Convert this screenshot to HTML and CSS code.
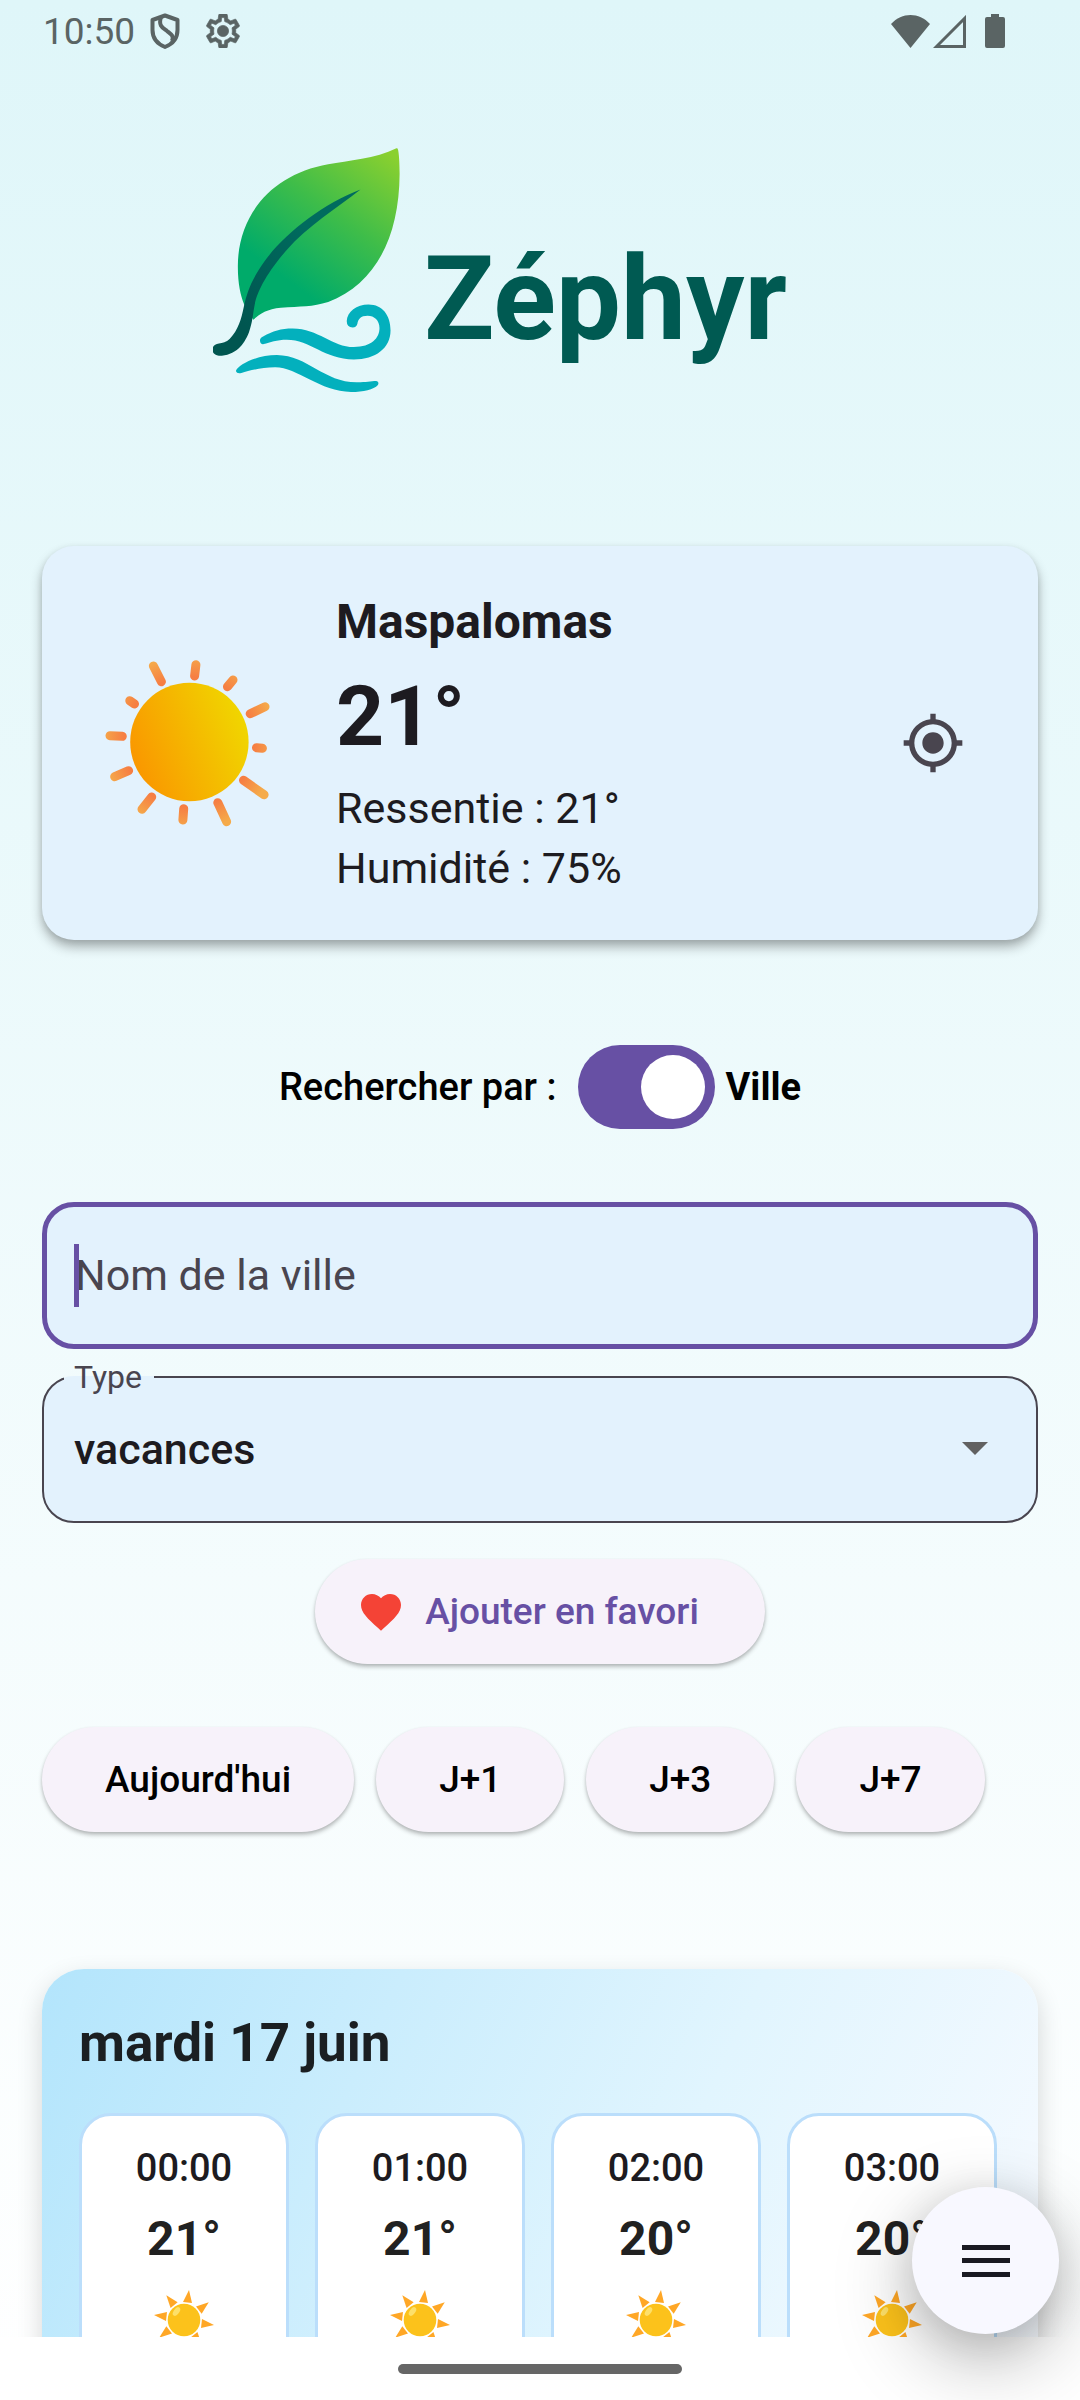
FILE: index.html
```html
<!DOCTYPE html>
<html lang="fr">
<head>
<meta charset="utf-8">
<meta name="viewport" content="width=device-width, initial-scale=1">
<title>Zéphyr</title>
<link rel="stylesheet" href="styles.css">
</head>
<body>
<div class="shell">
  <header class="status">
    <div class="status-group">
      <time class="clock">10:50</time>
      <svg class="ic-shield" viewBox="0 0 30 36" width="30" height="36" fill="none" stroke="#5a6464" stroke-width="4" stroke-linejoin="round"><path d="M15 2.500 27.500 7v10c0 8-5 14-12.500 17C7.500 31 2.500 25 2.500 17V7z"/><path d="M11 4C8 13 13 15 17 18c5 4 7 5 5 10"/></svg>
      <svg class="ic-gear" viewBox="2 2 20 20" width="34" height="34" fill="#5a6464" stroke="#5a6464" stroke-width=".4"><path d="M19.430 12.980c.040-.320.070-.640.070-.980s-.030-.660-.070-.980l2.110-1.650c.190-.150.240-.420.120-.640l-2-3.460c-.090-.160-.260-.250-.440-.250-.060 0-.120.010-.170.030l-2.490 1c-.520-.400-1.080-.730-1.690-.980l-.380-2.650C14.460 2.180 14.250 2 14 2h-4c-.250 0-.460.180-.490.420l-.380 2.650c-.610.250-1.170.590-1.690.980l-2.490-1c-.060-.020-.120-.030-.180-.030-.170 0-.340.090-.430.250l-2 3.460c-.130.220-.070.490.120.640l2.110 1.650c-.040.320-.070.650-.070.980s.030.660.070.980l-2.110 1.650c-.190.150-.240.420-.120.640l2 3.460c.090.160.260.250.440.250.060 0 .120-.010.170-.030l2.490-1c.520.400 1.080.730 1.690.980l.380 2.650c.030.240.240.420.490.420h4c.250 0 .460-.180.490-.420l.380-2.650c.610-.250 1.170-.590 1.690-.980l2.490 1c.060.020.120.030.180.030.170 0 .340-.090.430-.250l2-3.460c.120-.220.070-.490-.120-.640l-2.110-1.650zm-1.980-1.710c.040.310.050.520.050.730 0 .210-.020.430-.050.730l-.140 1.130.890.700 1.080.840-.700 1.210-1.270-.510-1.040-.420-.900.680c-.430.320-.840.560-1.250.730l-1.060.430-.160 1.130-.200 1.350h-1.400l-.190-1.350-.160-1.130-1.060-.430c-.430-.180-.830-.410-1.230-.710l-.910-.700-1.060.430-1.270.510-.700-1.210 1.080-.840.890-.700-.140-1.130c-.030-.310-.050-.540-.050-.740s.020-.430.050-.730l.140-1.130-.890-.700-1.080-.840.700-1.210 1.270.510 1.040.420.900-.680c.430-.320.840-.560 1.250-.730l1.060-.430.160-1.130.200-1.350h1.390l.190 1.350.160 1.130 1.060.430c.430.180.830.410 1.230.710l.910.700 1.060-.430 1.270-.510.700 1.210-1.070.850-.890.700.140 1.130z"/><circle cx="12" cy="12" r="3.300"/></svg>
    </div>
    <div class="status-group status-right">
      <svg viewBox="0 0 39 33" width="39" height="33" fill="#5a6464"><path d="M19.500 33 0 9C11-3 28-3 39 9z"/></svg>
      <svg class="ic-signal" viewBox="0 0 33 33" width="33" height="33" fill="none" stroke="#5a6464" stroke-width="3"><path d="M3.500 31.500h28v-28z"/></svg>
      <svg viewBox="0 0 20 34" width="20" height="34" fill="#5a6464"><path d="M6 0h8v3h4q2 0 2 2v27q0 2-2 2H2q-2 0-2-2V5q0-2 2-2h4z"/></svg>
    </div>
  </header>

  <main class="content">
    <h1 class="logo">
      <svg viewBox="58 52 474 736" width="187" height="245" preserveAspectRatio="none" aria-hidden="true">
        <defs>
          <linearGradient id="leaf" x1=".9" y1="0" x2=".35" y2=".8"><stop offset="0" stop-color="#8ad02f"/><stop offset=".5" stop-color="#3fbd49"/><stop offset="1" stop-color="#00ab6a"/></linearGradient>
          <linearGradient id="stem" x1="1" y1="0" x2="0" y2="1"><stop offset=".3" stop-color="#006b5e"/><stop offset=".8" stop-color="#005650"/></linearGradient>
        </defs>
        <path fill="url(#leaf)" d="M523 53C470 85 400 90 350 101 210 130 120 250 121 410c0 50 7 85 16 112l23 46c15-16 35-33 70-36 50-4 80-2 120-17C470 460 530 320 531 130c0-35-2-65-4-73q-1-5-4-4z"/>
        <path fill="url(#stem)" d="M432 177C335 220 240 310 190 390c-35 58-46 95-54 140-6 35-14 70-36 96-8 10-18 12-27 13-23 4-22 34 0 37 42 0 64-34 76-70 9-28 10-55 15-85 6-36 28-90 78-159 60-80 126-125 190-185z"/>
        <g fill="#03b0bd">
          <path d="M177 630q0-8 8-12c25-16 45-24 75-24 65 0 100 56 155 56 45 0 65-27 65-57 0-23-13-37-30-37-18 0-24 10-26 24q-2 11-12 11-15 0-15-19c1-28 25-50 55-50 36 0 56 33 56 78 0 53-38 87-93 87-75 0-110-59-170-59-25 0-43 8-58 13q-9 2-10-11z"/>
          <path d="M116 722c6-20 54-48 104-48 80 2 120 84 205 82 20 0 33-4 47-4q8 2 4 12c-11 14-36 21-68 21-78 0-138-75-193-74-35 1-65 9-85 17q-12 3-14-6z"/>
        </g>
      </svg>
      <span class="wordmark">Zéphyr</span>
    </h1>

    <section class="weather">
      <svg viewBox="0 0 166 167" width="166" height="167" role="img" aria-label="Ensoleillé">
        <defs>
          <linearGradient id="sun" x1="0" y1=".7" x2="1" y2=".3"><stop offset="0" stop-color="#fa9500"/><stop offset="1" stop-color="#f0d800"/></linearGradient>
          <radialGradient id="rays" gradientUnits="userSpaceOnUse" cx="84" cy="82" r="88"><stop offset=".74" stop-color="#f67e43"/><stop offset="1" stop-color="#f5ab4a"/></radialGradient>
        </defs>
        <path stroke="url(#rays)" stroke-width="9" stroke-linecap="round" d="M48.400 6l8 15.700M90.900 4.700 89.600 16M128 20l-5.500 6.700M160 46.700l-14.800 7M151.500 87.700l5.900.600M138.500 120.300l20.600 14.400M112.800 142.700l8.800 19M78.700 148.700l-.800 11.300M46.700 137 37 149.300M23.600 110.700l-13.900 6M17.300 76.300 5 75.700M24.800 40.700l4.700 3.300"/>
        <circle cx="84.400" cy="82" r="59.200" fill="url(#sun)"/>
      </svg>
      <div class="weather-text">
        <h2 class="city">Maspalomas</h2>
        <p class="degrees">21°</p>
        <p>Ressentie : 21°</p>
        <p>Humidité : 75%</p>
      </div>
      <button class="locate" type="button" aria-label="Ma position">
        <svg viewBox="0 0 24 24" width="64" height="64" fill="#49454f"><path d="M12 8c-2.210 0-4 1.790-4 4s1.790 4 4 4 4-1.790 4-4-1.790-4-4-4zm8.940 3A8.994 8.994 0 0 0 13 3.060V1h-2v2.060A8.994 8.994 0 0 0 3.060 11H1v2h2.060A8.994 8.994 0 0 0 11 20.940V23h2v-2.060A8.994 8.994 0 0 0 20.940 13H23v-2h-2.060zM12 19c-3.870 0-7-3.130-7-7s3.130-7 7-7 7 3.130 7 7-3.130 7-7 7z"/></svg>
      </button>
    </section>

    <div class="mode">
      <label for="mode">Rechercher par :</label>
      <input class="switch" type="checkbox" role="switch" id="mode" checked>
      <strong>Ville</strong>
    </div>

    <div class="field">
      <input class="city-input" type="text" placeholder="Nom de la ville" aria-label="Nom de la ville">
      <span class="caret"></span>
    </div>

    <fieldset class="select-field">
      <legend><label for="kind">Type</label></legend>
      <select id="kind"><option>vacances</option></select>
      <svg class="arrow" viewBox="0 0 26 13" width="26" height="13" fill="#616161"><path d="M0 0h26L13 13z"/></svg>
    </fieldset>

    <button class="pill favorite" type="button">
      <svg viewBox="0 0 24 24" width="48" height="48" fill="#f44336"><path d="m12 21.350-1.450-1.320C5.400 15.360 2 12.280 2 8.500 2 5.420 4.420 3 7.500 3c1.740 0 3.410.810 4.500 2.090C13.090 3.810 14.760 3 16.500 3 19.580 3 22 5.420 22 8.500c0 3.780-3.400 6.860-8.550 11.540L12 21.350z"/></svg>
      Ajouter en favori
    </button>

    <nav class="days">
      <button class="pill" type="button">Aujourd'hui</button>
      <button class="pill" type="button">J+1</button>
      <button class="pill" type="button">J+3</button>
      <button class="pill" type="button">J+7</button>
    </nav>

    <section class="forecast">
      <h2>mardi 17 juin</h2>
      <svg width="0" height="0" class="defs" aria-hidden="true">
        <symbol id="mini-sun" viewBox="-32 -32 64 64">
          <g fill="#ffa726">
            <path id="ray" d="M5-30-1-18 8-17z"/>
            <use href="#ray" transform="rotate(45)"/><use href="#ray" transform="rotate(90)"/><use href="#ray" transform="rotate(135)"/><use href="#ray" transform="rotate(180)"/><use href="#ray" transform="rotate(225)"/><use href="#ray" transform="rotate(270)"/><use href="#ray" transform="rotate(315)"/>
          </g>
          <circle r="16.300" fill="#fcc21b"/>
          <ellipse cx="-7.500" cy="-8.500" rx="2.800" ry="5" transform="rotate(35 -7.500 -8.500)" fill="#fde06a"/>
        </symbol>
      </svg>
      <ul class="hours">
        <li><time>00:00</time><b>21°</b><svg width="64" height="64"><use href="#mini-sun"/></svg></li>
        <li><time>01:00</time><b>21°</b><svg width="64" height="64"><use href="#mini-sun"/></svg></li>
        <li><time>02:00</time><b>20°</b><svg width="64" height="64"><use href="#mini-sun"/></svg></li>
        <li><time>03:00</time><b>20°</b><svg width="64" height="64"><use href="#mini-sun"/></svg></li>
      </ul>
    </section>
  </main>

  <footer class="gesture"><span class="handle"></span></footer>

  <button class="fab" type="button" aria-label="Menu">
    <svg viewBox="0 0 48 32" width="48" height="32" fill="#1a1a22"><path d="M0 0h48v5H0zM0 13h48v5H0zM0 27h48v5H0z"/></svg>
  </button>
</div>
</body>
</html>
```
FILE: styles.css
```css
* { box-sizing: border-box; }

body {
  margin: 0;
  font-family: Roboto, "Liberation Sans", sans-serif;
  font-size: 43px;
  color: #1d1b20;
}

h1, h2, p, ul { margin: 0; padding: 0; }

button, input, select { font: inherit; color: inherit; }

svg { display: block; flex: none; }

.shell {
  position: relative;
  display: flex;
  flex-direction: column;
  height: 100vh;
  overflow: hidden;
  background: linear-gradient(#dff6f9, #ffffff);
}

/* system status bar */
.status {
  flex: none;
  display: flex;
  justify-content: space-between;
  align-items: center;
  height: 62px;
  padding: 0 75px 0 43px;
}

.status-group { display: flex; align-items: center; }

.clock { font-size: 37px; color: #5a6464; }
.ic-shield { margin-left: 15px; }
.ic-gear { margin-left: 26px; }
.ic-signal { margin: 0 19px 0 3px; }

.content {
  flex: 1;
  min-height: 0;
  overflow-y: auto;
  scrollbar-width: none;
  padding: 86px 42px 0;
}

.logo {
  display: flex;
  gap: 24px;
  width: 654px;
  margin: 0 auto 153px;
}

.wordmark {
  padding-top: 57px;
  font-size: 116px;
  font-weight: 700;
  line-height: 188px;
  color: #005a52;
}

/* current weather */
.weather {
  display: flex;
  align-items: center;
  height: 394px;
  padding: 0 63px;
  border-radius: 32px;
  background: #e3f2fd;
  box-shadow: 0 7px 12px rgba(0, 0, 0, .3), 0 2px 6px rgba(0, 0, 0, .08);
}

.weather-text { flex: 1; margin-left: 65px; line-height: 60px; }
.city { font-size: 48px; font-weight: 700; line-height: 68px; }
.degrees { font-size: 84px; font-weight: 700; line-height: 122px; }

.locate {
  padding: 10px;
  border: 0;
  background: none;
}

/* search mode */
.mode {
  display: flex;
  justify-content: center;
  align-items: center;
  margin-top: 105px;
  font-size: 38px;
  font-weight: 500;
  color: #000000;
}

.mode strong { font-weight: 700; }

.switch {
  appearance: none;
  width: 137px;
  height: 84px;
  margin: 0 11px 0 21px;
  padding: 10px;
  border-radius: 42px;
  background: #6750a4;
}

.switch::before {
  content: "";
  display: block;
  width: 64px;
  height: 64px;
  margin-left: auto;
  border-radius: 50%;
  background: #ffffff;
}

/* form fields */
.field { position: relative; margin-top: 73px; }

.city-input {
  display: block;
  width: 100%;
  height: 147px;
  padding: 0 28px 2px;
  border: 5px solid #6750a4;
  border-radius: 32px;
  outline: 0;
  background: #e3f2fd;
}

.city-input::placeholder { color: #49454f; opacity: 1; }

.caret {
  position: absolute;
  top: 42px;
  left: 32px;
  width: 5px;
  height: 63px;
  background: #6750a4;
}

.select-field {
  display: flex;
  align-items: center;
  min-width: 0;
  height: 165px;
  margin: 9px 0 0;
  padding: 0 48px 20px 20px;
  border: 2px solid #49454f;
  border-radius: 32px;
  background: #e3f2fd;
}

.select-field legend {
  padding: 0 12px 0 10px;
  font-size: 32px;
  line-height: 38px;
  color: #49454f;
}

.select-field select {
  flex: 1;
  appearance: none;
  height: 100px;
  padding: 0 10px;
  border: 0;
  outline: 0;
  background: none;
  font-weight: 500;
}

/* pill buttons */
.pill {
  height: 105px;
  padding: 0 63px;
  border: 0;
  border-radius: 53px;
  background: #f7f2fa;
  box-shadow: 0 3px 4px rgba(0, 0, 0, .24), 0 1px 3px rgba(0, 0, 0, .08);
  font-size: 37px;
  font-weight: 500;
  color: #000000;
}

.favorite {
  display: flex;
  align-items: center;
  gap: 20px;
  margin: 36px auto 0;
  padding: 0 66px 0 42px;
  color: #6750a4;
}

.days { display: flex; gap: 22px; margin-top: 63px; }

/* hourly forecast */
.forecast {
  margin-top: 137px;
  padding: 44px 41px 44px 37px;
  border-radius: 42px;
  background: linear-gradient(115deg, #b3e5fc, #e1f5fe 60%, #f6faff 95%);
  box-shadow: 0 10px 26px rgba(0, 0, 0, .16);
}

.forecast h2 { font-size: 53px; line-height: 60px; color: #1b1f22; }

.defs { position: absolute; }

.hours {
  display: grid;
  grid-template-columns: repeat(4, 1fr);
  gap: 26px;
  margin-top: 40px;
  list-style: none;
}

.hours li {
  display: flex;
  flex-direction: column;
  align-items: center;
  gap: 21px;
  padding: 30px 0;
  border: 3px solid #bbdefb;
  border-radius: 32px;
  background: #ffffff;
}

.hours time { font-size: 38px; font-weight: 500; line-height: 44px; }
.hours b { font-size: 48px; line-height: 56px; color: #212121; }

/* gesture bar */
.gesture {
  flex: none;
  display: flex;
  justify-content: center;
  align-items: center;
  height: 63px;
  background: #ffffff;
}

.handle {
  width: 284px;
  height: 10px;
  border-radius: 5px;
  background: #666666;
}

.fab {
  position: absolute;
  right: 21px;
  bottom: 66px;
  display: grid;
  place-items: center;
  width: 147px;
  height: 147px;
  border: 0;
  border-radius: 50%;
  background: #f8f8ff;
  box-shadow: 0 26px 80px rgba(0, 0, 0, .28), 0 8px 40px rgba(0, 0, 0, .12);
}
```
